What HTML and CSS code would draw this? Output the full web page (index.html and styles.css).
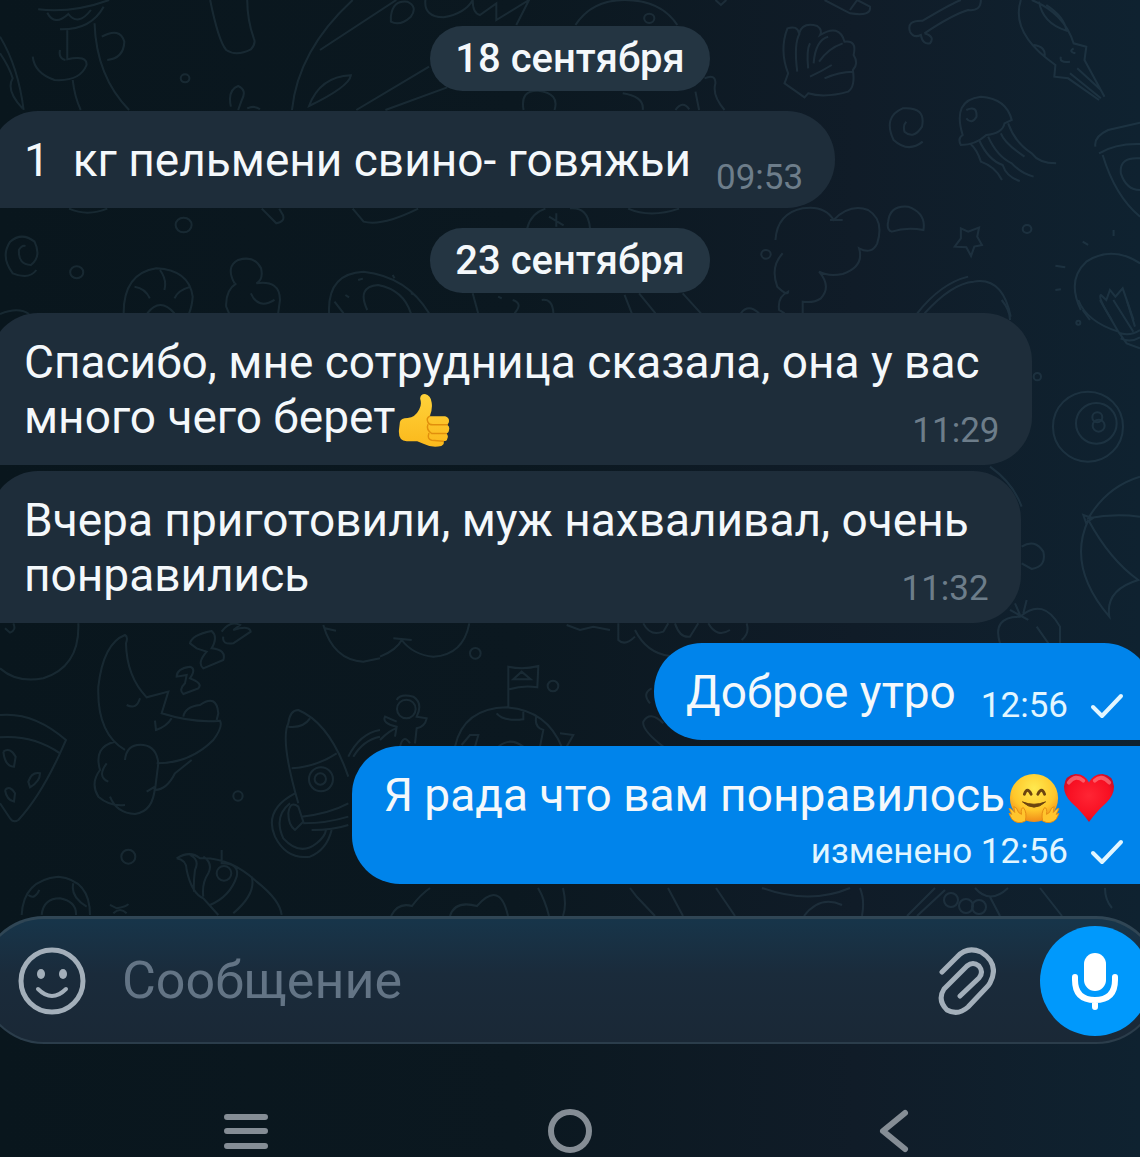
FILE: index.html
```html
<!DOCTYPE html>
<html lang="ru">
<head>
<meta charset="utf-8">
<meta name="viewport" content="width=device-width, initial-scale=1">
<title>Чат</title>
<link rel="stylesheet" href="styles.css">
</head>
<body>
<svg class="wallpaper" viewBox="0 0 1140 1157" preserveAspectRatio="xMidYMin slice" aria-hidden="true">
  <!-- cupcake, candy stick, leaves, snail shell, duck, doughnut -->
  <g transform="scale(.3636 .3333)">
    <path d="M105 28Q200 40 300 0M130 38Q150 80 188 42Q215 80 250 30M165 88Q250 90 285 20M185 90V178Q240 165 238 195Q220 245 150 240Q95 220 90 170M165 150Q160 175 180 180M260 70Q265 230 355 330M200 240Q205 290 222 330M280 110Q330 80 342 125Q340 175 295 180M0 110Q50 200 65 330M0 160Q25 200 35 235Q15 270 62 325"/>
    <path d="M578 0Q600 120 622 150Q650 170 690 148Q705 130 698 115Q680 60 680 0M635 320Q625 270 655 258Q680 270 665 300L655 330M680 325Q700 315 715 328"/>
    <circle cx="509" cy="235" r="12"/><circle cx="505" cy="675" r="22"/><circle cx="211" cy="817" r="18"/>
    <path d="M970 0Q820 150 803 330M880 150L1090 0M850 318Q880 230 965 226Q960 260 850 318ZM980 330L1180 200M1060 330L1230 262M1075 50Q1080 0 1120 5Q1150 20 1130 50Q1100 80 1075 65ZM1170 0Q1165 50 1220 52Q1280 40 1300 0Q1300 40 1320 45L1365 10V60L1455 0L1420 75M1440 330Q1430 270 1480 272Q1540 280 1525 330"/>
    <path d="M190 626Q240 650 295 626M720 626L760 670Q785 665 778 645L768 626M970 626L1000 665Q1050 680 1150 626M1450 685Q1460 640 1500 626M1530 640V680M1510 650L1550 676"/>
    <path d="M100 810Q80 840 35 820Q0 770 28 725Q60 695 95 725Q115 770 85 795Q50 795 52 750Q60 735 70 738M340 940Q340 820 430 805Q520 810 530 890Q528 920 520 940M370 860Q400 865 412 895M440 810Q460 840 452 870M525 860Q490 870 480 895M405 940Q440 890 480 940"/>
    <path d="M645 850Q620 800 655 780Q700 765 718 805Q725 840 705 850Q770 840 770 900L765 940M650 850Q620 870 622 920L630 940M690 880Q710 930 755 900M905 940Q900 820 1000 815Q1120 830 1180 940M1010 930Q980 860 1040 855Q1110 870 1130 940M920 905L945 940M950 885L960 892M985 840L998 836M1080 825L1085 835M1130 880L1140 884M1300 880L1315 940M1370 890L1380 895M1410 900Q1440 910 1415 940M1490 900Q1520 895 1522 940M0 942Q50 920 80 942"/>
  </g>
  <!-- shell, bone, squid, jellyfish, pizza, cloud, star, bulb -->
  <g transform="translate(570 0) scale(.3636 .3333)">
    <path d="M15 75Q60 0 150 0Q250 0 295 75M700 0L770 40Q830 50 825 20L790 0L770 30M400 0L415 15L430 0"/>
    <circle cx="218" cy="55" r="14"/>
    <path d="M600 220Q575 150 598 85Q625 75 630 100Q640 65 680 78Q695 90 688 105Q740 70 755 125Q790 120 780 165Q795 190 778 210Q785 260 765 275Q700 295 655 280L645 292L590 250ZM625 215Q615 130 632 100M655 205Q650 150 660 130M670 190Q675 120 710 110M685 185Q710 145 750 130M660 230Q690 215 720 195M700 235Q740 215 778 215"/>
    <path d="M935 95Q925 60 970 62Q1050 10 1075 0M975 100Q1050 45 1095 30Q1130 35 1130 0M935 95Q945 115 965 105Q970 135 990 130Q1005 110 975 100"/>
    <path d="M1240 0Q1210 100 1335 195L1332 230L1370 235L1455 300M1270 0Q1360 40 1385 130L1420 140L1415 180L1470 290M1290 5Q1300 70 1365 92Q1360 50 1310 15M1275 135Q1310 140 1305 170M1375 220L1460 295M1395 205L1460 270M1350 170Q1345 190 1375 185M1385 145Q1370 155 1390 160"/>
    <path d="M1080 405Q1050 300 1130 290Q1200 295 1215 360L1195 370Q1190 400 1145 405Q1115 435 1075 435Q1065 415 1080 405ZM1090 330Q1120 315 1118 350Q1105 375 1090 355M1100 430Q1120 450 1130 485Q1170 500 1188 540M1125 420Q1150 480 1190 495Q1200 530 1237 543M1150 410Q1175 470 1215 490Q1240 520 1275 530M1185 400Q1195 430 1250 470M1205 370Q1225 430 1270 460Q1290 490 1337 490"/>
    <path d="M970 425Q930 460 890 420Q860 350 915 325Q980 320 968 380Q945 420 920 395Q915 375 925 365M1445 440Q1440 410 1480 390L1568 368M1455 460Q1500 430 1568 432M1465 465Q1500 590 1568 650M1568 475Q1510 470 1515 520Q1530 570 1568 570"/>
    <path d="M565 720Q570 640 640 625Q700 615 725 660Q770 610 820 630Q865 660 845 730Q830 765 795 745Q810 800 750 822Q710 830 685 815Q720 860 690 895Q670 910 640 905V940M715 660H750M585 760Q550 800 570 860Q600 890 600 875Q570 890 575 930L590 940M875 665Q880 615 930 620Q980 640 972 690Q925 680 885 695Q870 690 875 665ZM0 625Q50 620 55 685M160 626Q220 655 300 626M150 885L170 940M190 880L235 940M310 880L360 940M470 940Q490 910 520 940M145 280Q205 290 200 330M345 275L355 330M370 235Q400 220 400 250Q390 285 425 330M290 330Q310 300 328 328"/>
    <path d="M1075 685L1095 695L1125 683L1120 710L1133 735L1112 740L1103 768L1090 742L1058 740L1075 715ZM955 940Q1020 850 1095 830M975 940Q1050 850 1110 845Q1190 830 1212 950M1405 930Q1365 840 1420 785Q1490 735 1568 790M1410 930L1430 960M1490 960Q1450 890 1460 885L1475 900L1485 870L1500 890L1520 865L1550 960M1335 797L1362 802M1335 870L1350 868M1495 690V708M1410 725L1425 735"/>
    <circle cx="539" cy="763" r="13"/><circle cx="1257" cy="687" r="12"/>
  </g>
  <!-- bulb base, billiard ball, umbrella, apple -->
  <g transform="translate(960 300) scale(.3333)">
    <path d="M355 0Q380 65 475 95L500 130L540 145M420 0L475 95M460 0L520 95M500 0L525 80M475 98Q510 110 540 90M482 115Q510 130 540 112M125 0Q150 30 150 60M90 500Q160 550 185 620M185 740Q225 715 250 755Q260 800 215 807L185 790"/>
    <circle cx="384" cy="380" r="105"/><circle cx="409" cy="370" r="61"/><circle cx="412" cy="352" r="15"/><circle cx="416" cy="377" r="18"/><circle cx="355" cy="68" r="6"/><circle cx="232" cy="230" r="11"/>
    <path d="M540 530Q440 560 385 655Q460 640 540 650M370 645L398 655L378 668ZM385 660Q320 800 448 950Q435 870 535 840Q450 780 385 660M120 1030Q95 950 180 950Q250 890 300 980V1030M150 930L205 960M165 910L180 945M200 900L190 940M230 980L265 1030"/>
  </g>
  <!-- moon, pizza slice, rocket, seashell -->
  <g transform="translate(0 600) scale(.3333)">
    <path d="M235 70Q240 200 130 235Q50 250 0 205M40 70Q50 90 30 98L15 85M0 345Q100 335 198 420L180 460Q100 405 0 412M180 460Q120 590 55 660Q40 670 30 655L0 610M10 455Q30 440 47 470L42 500Q15 500 10 455M85 545Q95 515 120 520Q120 545 90 562ZM15 570Q30 555 45 580L42 605Q20 600 15 570"/>
    <path d="M375 450Q290 400 295 260Q310 130 375 105Q385 110 378 130Q380 230 440 292L505 275L485 340Q580 370 660 362Q670 380 640 420Q570 490 470 490M380 315Q410 330 420 295M465 362L468 390Q500 380 515 355M550 350Q555 320 600 315Q650 280 655 340L650 360M375 480Q380 430 430 435Q470 440 475 490L465 570Q500 570 525 520L575 480M345 425Q280 440 300 510Q270 550 295 590Q330 620 375 615M320 490Q290 530 325 545M330 590Q350 640 405 642Q460 635 465 560L440 575M530 230Q530 205 570 200Q590 205 570 235Q610 250 595 265L550 282Q535 270 555 250L560 225ZM570 130Q575 105 635 93Q655 110 635 145Q680 150 670 180L610 205Q590 190 620 155L590 145ZM665 95Q690 60 720 75L700 90Q750 75 752 95L700 130Q665 135 670 110M970 75Q1000 180 1090 185L1140 175M975 85L1008 92"/>
    <path d="M895 610Q840 420 865 370Q870 330 895 330Q990 370 1045 530M865 380Q910 385 930 355M875 505Q950 500 1010 460M905 650Q990 640 1045 610M910 670Q980 670 1045 650M935 690Q1000 690 1045 675M865 640Q870 600 895 620L910 665L885 690Q865 675 865 640M885 580Q790 630 825 710Q860 780 930 770Q980 750 995 690M870 610Q820 650 850 715Q900 770 950 730Q975 710 978 690M1045 470Q1080 400 1140 390M1060 470Q1090 420 1140 410"/>
    <circle cx="963" cy="538" r="36"/><circle cx="961" cy="537" r="17"/><circle cx="714" cy="588" r="14"/><circle cx="385" cy="770" r="21"/><circle cx="672" cy="820" r="22"/>
    <path d="M530 775Q570 750 600 775Q690 770 770 845Q840 900 845 945M530 775Q560 780 560 810Q575 880 610 895L655 945M570 765Q600 780 585 810Q580 850 582 875M610 770Q640 790 625 820Q605 850 610 890M665 750V790Q720 790 710 830Q690 890 630 915M755 830Q770 880 700 940M65 945Q70 840 175 830Q270 840 270 945M125 945Q130 895 180 895Q230 905 228 945M85 885Q105 900 118 870M220 850Q210 890 260 920M330 915L350 925Q380 920 385 912M340 940Q360 920 380 940"/>
  </g>
  <!-- astronaut, planet with a flag -->
  <g transform="translate(380 600) scale(.3333)">
    <path d="M0 170Q50 150 65 120Q100 165 160 170Q250 165 268 70M40 115L95 120M385 320V200Q430 210 475 198L472 262Q430 255 388 268M400 238L425 215L452 238ZM225 440Q250 325 380 322Q500 330 545 440M350 340Q370 365 430 358V335M470 345Q460 380 490 390L480 440M245 435L270 405H295L285 440M355 440Q390 410 430 440M540 400L580 405L560 440M50 300Q60 280 100 290Q130 310 110 350L140 355Q135 380 110 385L105 430M50 365L15 350Q5 370 50 380L45 410M0 420Q30 390 50 385M60 440Q70 400 90 430M560 75L600 90L640 80L690 90M715 70V120Q735 140 765 110M765 90Q800 160 870 168M790 70Q810 110 850 95L865 70M885 70Q900 115 930 110L955 70M985 70Q1010 115 1050 90M1100 70Q1110 100 1085 120M815 265Q785 280 810 310M850 370Q810 330 790 365Q785 390 850 440"/>
    <circle cx="79" cy="327" r="28"/><circle cx="286" cy="160" r="16"/><circle cx="519" cy="258" r="16"/>
  </g>
  <path d="M391 916Q398 902 412 906Q420 895 430 888M450 916Q455 900 477 906Q500 880 508 916M538 888Q545 900 549 916M563 888Q567 905 563 916M630 888L637 897L655 916M668 888L683 916M716 888L735 916M762 888Q810 905 850 888M804 916Q820 895 842 905M860 888Q865 900 862 916M907 916L935 888M917 916L945 890M975 888Q990 905 1008 888M990 897L1000 916M1040 888L1062 916M1105 888Q1105 900 1112 908"/>
  <circle cx="951" cy="900" r="7"/><circle cx="966" cy="906" r="7"/><circle cx="979" cy="907" r="7"/>
</svg>

<main class="chat">
  <h2 class="date">18 сентября</h2>
  <article class="msg in">
    <p>1&nbsp; кг пельмени свино- говяжьи <time class="meta low">09:53</time></p>
  </article>
  <h2 class="date">23 сентября</h2>
  <article class="msg in">
    <p>Спасибо, мне сотрудница сказала, она у вас<br>много чего берет<svg class="emoji" viewBox="0 0 54 56" role="img" aria-label="Большой палец вверх">
      <defs><linearGradient id="thumb" x1="0" y1="0" x2="0" y2="1"><stop offset="0" stop-color="#ffd23a"/><stop offset="1" stop-color="#fbb91c"/></linearGradient></defs>
      <path fill="url(#thumb)" d="M2 30Q3 26 10 26Q18 25 22 17Q25 12 23 6Q23 1 28 1Q34 2 35 10Q36 17 33 24H49Q53 25 53 29Q53 32 51 33Q54 35 53 38Q53 41 50 42Q53 44 51 48Q51 50 47 50Q49 53 45 55Q35 57 27 53L20 50H9Q0 50 1 38Z"/>
      <path fill="none" stroke="#e18f0c" stroke-width="1.5" stroke-linecap="round" d="M33 24Q29 26 31 30Q32 33 36 33H51M31 33Q29 38 35 42H50M32 42Q30 48 35 49L47 50"/>
    </svg> <time class="meta">11:29</time></p>
  </article>
  <article class="msg in joined">
    <p>Вчера приготовили, муж нахваливал, очень<br>понравились <time class="meta">11:32</time></p>
  </article>
  <article class="msg out">
    <p>Доброе утро <span class="meta"><time>12:56</time><svg class="tick" viewBox="0 0 34 26" role="img" aria-label="Отправлено"><path d="M3 14L12 23L31 3"/></svg></span></p>
  </article>
  <article class="msg out joined">
    <p class="line">Я рада что вам понравилось<svg class="emoji" viewBox="0 0 54 56" role="img" aria-label="Объятия">
      <defs><radialGradient id="face" cx=".5" cy=".3" r=".7"><stop offset="0" stop-color="#ffe94f"/><stop offset=".65" stop-color="#ffc62a"/><stop offset="1" stop-color="#f08a18"/></radialGradient></defs>
      <circle cx="27" cy="28" r="25" fill="url(#face)"/>
      <path d="M17 24Q20 16 24 24M31 24Q35 16 38 24" fill="none" stroke="#6b4410" stroke-width="3" stroke-linecap="round"/>
      <path d="M15 32Q27 43 39 32Q27 37 15 32Z" fill="#6b4410" stroke="#6b4410" stroke-linejoin="round"/>
      <path d="M18 52Q10 56 4 50L1 44L4 45L1 39Q3 38 7 43L6 37Q9 37 11 43L14 45Q13 38 16 38Q20 43 18 52ZM36 52Q44 56 50 50L53 44L50 45L53 39Q51 38 47 43L48 37Q45 37 43 43L40 45Q41 38 38 38Q34 43 36 52Z" fill="#ffc52d" stroke="#e58b13"/>
    </svg><svg class="emoji" viewBox="0 0 54 56" role="img" aria-label="Красное сердце">
      <defs><radialGradient id="heart" cx=".5" cy=".45" r=".6"><stop offset="0" stop-color="#ff2534"/><stop offset=".7" stop-color="#f80f22"/><stop offset="1" stop-color="#b90d2a"/></radialGradient></defs>
      <path d="M27 53Q20 43 9 33Q1 25 1 16Q2 4 13 3Q23 3 27 12Q31 3 41 3Q52 4 53 16Q53 25 45 33Q34 43 27 53Z" fill="url(#heart)"/>
      <path d="M6 12Q13 3 21 10M33 10Q40 3 48 12" fill="none" stroke="#ff8890" stroke-width="4" stroke-linecap="round" opacity=".6"/>
    </svg></p>
    <p class="meta edited"><span>изменено <time>12:56</time></span><svg class="tick" viewBox="0 0 34 26" role="img" aria-label="Отправлено"><path d="M3 14L12 23L31 3"/></svg></p>
  </article>
</main>

<form class="composer">
  <button class="icon" type="button" aria-label="Эмодзи">
    <svg width="68" height="68" viewBox="0 0 68 68"><circle cx="34" cy="34" r="31" fill="none" stroke="#a3afba" stroke-width="5"/><ellipse cx="23" cy="27" rx="4" ry="5" fill="#a3afba"/><ellipse cx="45" cy="27" rx="4" ry="5" fill="#a3afba"/><path d="M20 42Q34 56 48 42" fill="none" stroke="#a3afba" stroke-width="4" stroke-linecap="round"/></svg>
  </button>
  <input class="field" type="text" placeholder="Сообщение" aria-label="Сообщение">
  <button class="icon" type="button" aria-label="Прикрепить">
    <svg width="58" height="68" viewBox="0 0 58 68"><path d="M4 25L19 10Q29 -1 43 5Q62 17 52 36Q51 38 48 41L30 60Q20 69 9 63Q-1 53 6 42L29 19Q35 14 41 19Q46 25 41 31L22 49" fill="none" stroke="#a3afba" stroke-width="5" stroke-linecap="round" stroke-linejoin="round"/></svg>
  </button>
  <button class="mic" type="button" aria-label="Голосовое сообщение">
    <svg width="46" height="58" viewBox="0 0 46 58"><rect x="12" y="1" width="22" height="38" rx="11" fill="#fff"/><path d="M3 25V28Q3 48 23 48Q43 48 43 28V25M23 48V55" fill="none" stroke="#fff" stroke-width="6" stroke-linecap="round"/></svg>
  </button>
</form>

<nav class="system">
  <button type="button" aria-label="Недавние"><svg width="44" height="44" viewBox="0 0 44 44"><path d="M3 8H41M3 22H41M3 37H41"/></svg></button>
  <button type="button" aria-label="Домой"><svg width="44" height="44" viewBox="0 0 44 44"><circle cx="22" cy="22" r="19"/></svg></button>
  <button type="button" aria-label="Назад"><svg width="44" height="44" viewBox="0 0 44 44"><path d="M33 4L11 22L33 40"/></svg></button>
</nav>
</body>
</html>
```
FILE: styles.css
```css
* {
  box-sizing: border-box;
}

body {
  position: relative;
  display: flex;
  flex-direction: column;
  min-height: 100vh;
  margin: 0;
  overflow-x: hidden;
  background: linear-gradient(90deg, #09161d 0%, #0b1820 45%, #101c28 75%, #0f2230 100%);
  color: #f4f8fb;
  font-family: Roboto, "Noto Sans", sans-serif;
}

button {
  padding: 0;
  border: 0;
  background: none;
}

svg {
  display: block;
}

.wallpaper {
  position: absolute;
  inset: 0;
  z-index: -1;
  width: 100%;
  height: 100%;
  fill: none;
  stroke: #78a5b9;
  stroke-width: 2;
  opacity: 0.13;
}

.wallpaper * {
  vector-effect: non-scaling-stroke;
}

.chat {
  display: flex;
  flex: 1;
  flex-direction: column;
  align-items: flex-start;
  gap: 20px;
  padding: 26px 0 32px;
}

.date {
  align-self: center;
  margin: 0;
  padding: 0 25px;
  border-radius: 33px;
  background: #243542;
  font-size: 40px;
  font-weight: 500;
  line-height: 65px;
}

.msg {
  padding: 22px 32px 20px;
  font-size: 46px;
  line-height: 55px;
}

.msg p {
  margin: 0;
}

.in {
  margin-left: -10px;
  padding-left: 34px;
  border-radius: 48px 48px 48px 0;
  background: #1e2d3a;
}

.in p {
  padding-right: 20px;
}

.in .meta {
  margin-right: -20px;
  color: #6d7d8a;
}

.out {
  align-self: flex-end;
  margin-right: -12px;
  padding-right: 28px;
  border-radius: 48px 48px 0 48px;
  background: #0084eb;
}

.joined {
  margin-top: -14px;
}

.out.joined {
  padding-bottom: 12px;
  border-top-right-radius: 8px;
}

.msg .line {
  padding-right: 9px;
}

.meta {
  display: flex;
  float: right;
  align-items: center;
  gap: 22px;
  margin-top: 20px;
  margin-bottom: -20px;
  margin-left: 25px;
  font-size: 35px;
  line-height: 41px;
}

.low {
  margin-top: 24px;
  margin-bottom: -24px;
}

.out .meta {
  color: #e2f6ff;
}

.msg .edited {
  float: none;
  justify-content: flex-end;
  margin: 8px 0 0;
}

.tick {
  width: 34px;
  height: 26px;
  fill: none;
  stroke: #e2f6ff;
  stroke-width: 4;
  stroke-linecap: round;
  stroke-linejoin: round;
}

.emoji {
  display: inline-block;
  width: 52px;
  height: 54px;
  margin: -4px 0 -4px 3px;
  vertical-align: -10px;
}

.composer {
  display: flex;
  align-items: center;
  height: 128px;
  margin: 0 -20px;
  padding: 0 20px 0 36px;
  border: 2px solid #2b3d4b;
  border-top: 3px solid #304655;
  border-radius: 64px;
  background: linear-gradient(#17354a, #1a2b3b 45%, #1a2836);
}

.field {
  flex: 1;
  min-width: 0;
  margin: 0 24px 0 36px;
  padding: 0;
  border: 0;
  outline: 0;
  background: none;
  color: #f4f8fb;
  font: 52px/60px Roboto, "Noto Sans", sans-serif;
}

.field::placeholder {
  color: #637485;
  opacity: 1;
}

.mic {
  display: grid;
  place-items: center;
  width: 110px;
  height: 110px;
  margin: 0 -12px 0 44px;
  border-radius: 50%;
  background: #0099fc;
}

.system {
  display: flex;
  justify-content: space-between;
  padding: 65px 224px 4px;
}

.system svg {
  fill: none;
  stroke: #858d95;
  stroke-width: 6;
  stroke-linecap: round;
  stroke-linejoin: round;
}
```
